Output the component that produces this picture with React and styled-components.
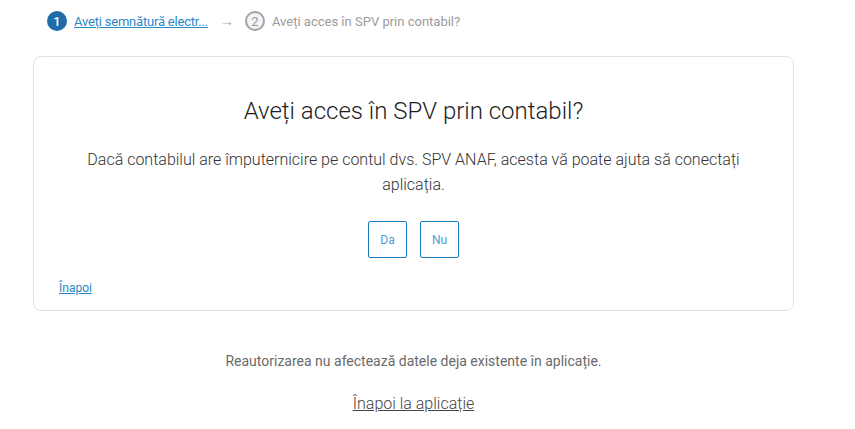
import React from 'react';
import styled, { createGlobalStyle } from 'styled-components';

const GlobalStyle = createGlobalStyle`
    body {
        margin: 0;
        background: #ffffff;
        font-family: Roboto, "Liberation Sans", sans-serif;
    }
`;

const Page = styled.div`
    padding: 11px 61px 0 33px;
    display: flex;
    flex-direction: column;
`;

const Stepper = styled.div`
    display: flex;
    align-items: center;
    padding-left: 14px;
    height: 20px;
    font-size: 13px;
`;

const Step = styled.div`
    display: flex;
    align-items: center;
    gap: 7px;
`;

const StepNumber = styled.span`
    width: 20px;
    height: 20px;
    box-sizing: border-box;
    border-radius: 50%;
    display: flex;
    align-items: center;
    justify-content: center;
    font-size: 13px;
    font-weight: ${props => (props.active ? 500 : 400)};
    color: ${props => (props.active ? '#ffffff' : '#9a9a9a')};
    background: ${props => (props.active ? '#1f6ca8' : '#f1f4f8')};
    border: ${props => (props.active ? 'none' : '2px solid #a3a3a3')};
`;

const StepLink = styled.a`
    color: #2a88c6;
    text-decoration: underline;
    letter-spacing: -0.2px;
    cursor: pointer;
`;

const StepLabel = styled.span`
    color: #9b9b9b;
`;

const Arrow = styled.span`
    color: #a8a8a8;
    margin: 0 11px 0 12px;
    font-size: 14px;
`;

const Card = styled.div`
    margin-top: 25px;
    border: 1px solid #e2e2e2;
    border-radius: 8px;
    padding: 40px 24px 14px;
    display: flex;
    flex-direction: column;
    align-items: center;
`;

const Title = styled.h1`
    margin: 0;
    font-size: 24px;
    font-weight: 300;
    line-height: 28px;
    color: #1e1e1e;
`;

const Text = styled.p`
    margin: 22px 0 0;
    font-size: 16px;
    line-height: 25px;
    font-weight: 300;
    color: #333333;
    text-align: center;
`;

const Choices = styled.div`
    display: flex;
    gap: 13px;
    margin-top: 24px;
`;

const Choice = styled.button`
    width: 39px;
    height: 37px;
    box-sizing: border-box;
    border: 1px solid #1a7cbc;
    border-radius: 2px;
    background: #ffffff;
    color: #4c9ed2;
    font-family: Roboto, "Liberation Sans", sans-serif;
    font-size: 12px;
    padding: 0;
    cursor: pointer;
`;

const BackRow = styled.div`
    align-self: stretch;
    margin-top: 19px;
`;

const BackLink = styled.a`
    color: #2a88c6;
    font-size: 12px;
    margin-left: 1px;
    text-decoration: underline;
    cursor: pointer;
`;

const Note = styled.p`
    margin: 41px 0 0;
    text-align: center;
    font-size: 14px;
    line-height: 18px;
    color: #6a6a6a;
`;

const ReturnLink = styled.a`
    align-self: center;
    margin-top: 24px;
    font-size: 16px;
    font-weight: 300;
    color: #444444;
    text-decoration: underline;
    cursor: pointer;
`;

export default function App() {
    return (
        <>
            <GlobalStyle />
            <Page>
                <Stepper>
                    <Step>
                        <StepNumber active>1</StepNumber>
                        <StepLink>Aveți semnătură electr...</StepLink>
                    </Step>
                    <Arrow>→</Arrow>
                    <Step>
                        <StepNumber>2</StepNumber>
                        <StepLabel>Aveți acces în SPV prin contabil?</StepLabel>
                    </Step>
                </Stepper>
                <Card>
                    <Title>Aveți acces în SPV prin contabil?</Title>
                    <Text>
                        Dacă contabilul are împuternicire pe contul dvs. SPV ANAF, acesta vă poate ajuta să conectați aplicația.
                    </Text>
                    <Choices>
                        <Choice>Da</Choice>
                        <Choice>Nu</Choice>
                    </Choices>
                    <BackRow>
                        <BackLink>Înapoi</BackLink>
                    </BackRow>
                </Card>
                <Note>Reautorizarea nu afectează datele deja existente în aplicație.</Note>
                <ReturnLink>Înapoi la aplicație</ReturnLink>
            </Page>
        </>
    );
}
